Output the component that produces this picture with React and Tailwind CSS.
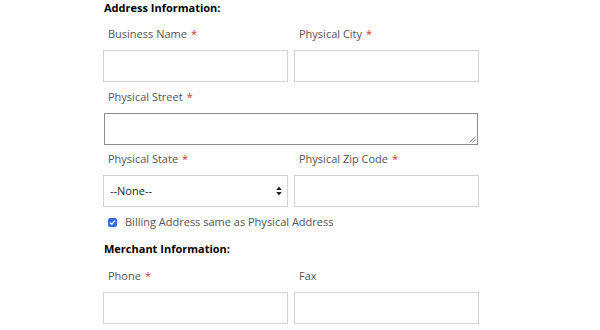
import React from "react";

function Label({ children, required }) {
  return (
    <div className="h-4 pl-[5px] text-[11px] leading-4 text-[#545454]">
      {children}
      {required && <span className="ml-1 text-[#d0342c]">*</span>}
    </div>
  );
}

function Field({ label, required, children }) {
  return (
    <div className="flex w-[186px] flex-col gap-2">
      <Label required={required}>{label}</Label>
      {children || <div className="h-8 border border-[#d3d3d5] bg-white" />}
    </div>
  );
}

export default function App() {
  return (
    <div
      className="h-[330px] w-[600px] overflow-hidden bg-white pl-[103px]"
      style={{ fontFamily: "'Open Sans', 'Noto Sans', sans-serif" }}
    >
      <div className="flex w-[376px] flex-col">
        <div className="h-[15px] pl-px text-[11px] font-bold leading-[15px] text-black">
          Address Information:
        </div>
        <div className="mt-[11px] flex gap-[6px]">
          <Field label="Business Name" required />
          <Field label="Physical City" required />
        </div>
        <div className="mt-[7px] flex flex-col gap-2">
          <Label required>Physical Street</Label>
          <div className="relative ml-px h-8 w-[374px] border border-[#8c8c8c] bg-white">
            <svg className="absolute bottom-px right-px" width="7" height="7" viewBox="0 0 7 7">
              <path d="M6.5 0.5 L0.5 6.5 M6.5 3.5 L3.5 6.5" stroke="#8a8a8a" strokeWidth="1" />
            </svg>
          </div>
        </div>
        <div className="mt-[6px] flex gap-[6px]">
          <Field label="Physical State" required>
            <div className="flex h-8 items-center justify-between border border-[#d3d3d5] bg-white pl-[6px] pr-[5px] text-[11px] text-[#1f1f1f]">
              <span>--None--</span>
              <svg width="6" height="10" viewBox="0 0 6 10">
                <path d="M3 0.5 L5.8 4 L0.2 4 Z" fill="#222" />
                <path d="M3 9.5 L5.8 6 L0.2 6 Z" fill="#222" />
              </svg>
            </div>
          </Field>
          <Field label="Physical Zip Code" required />
        </div>
        <div className="mt-[7px] flex h-4 items-center gap-[8px] pl-[5px]">
          <div className="flex h-[9px] w-[9px] items-center justify-center rounded-[2px] bg-[#2e6ce6]">
            <svg width="7" height="7" viewBox="0 0 7 7">
              <path d="M1 3.6 L2.8 5.3 L6 1.6" stroke="white" strokeWidth="1.3" fill="none" />
            </svg>
          </div>
          <span className="text-[11px] leading-4 text-[#545454]">
            Billing Address same as Physical Address
          </span>
        </div>
        <div className="mt-[11px] h-[15px] pl-px text-[11px] font-bold leading-[15px] text-black">
          Merchant Information:
        </div>
        <div className="mt-[12px] flex gap-[6px]">
          <Field label="Phone" required />
          <Field label="Fax" />
        </div>
      </div>
    </div>
  );
}
